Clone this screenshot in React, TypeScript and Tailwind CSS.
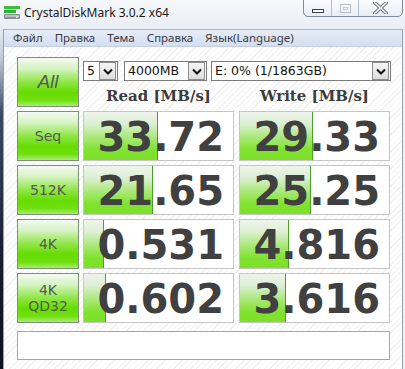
import React from 'react';

type Row = { label: React.ReactNode; read: string; write: string; rw: number; ww: number };

const rows: Row[] = [
  { label: 'Seq', read: '33.72', write: '29.33', rw: 74, ww: 73 },
  { label: '512K', read: '21.65', write: '25.25', rw: 69, ww: 71 },
  { label: '4K', read: '0.531', write: '4.816', rw: 20, ww: 49 },
  { label: <>4K<br />QD32</>, read: '0.602', write: '3.616', rw: 22, ww: 46 },
];

const menu = ['Файл', 'Правка', 'Тема', 'Справка', 'Язык(Language)'];

function GreenButton({ children, className = '' }: { children: React.ReactNode; className?: string }) {
  return (
    <div
      className={`w-[62px] h-[50px] shrink-0 border border-[#7f8d7c] bg-[linear-gradient(to_bottom,#f4faf2_0%,#d6f3c2_22%,#8fe646_50%,#66dc00_72%,#70df10_88%,#a6ee70_100%)] flex items-center justify-center text-center text-[#525c4e] font-['DejaVu_Sans',sans-serif] ${className}`}
    >
      {children}
    </div>
  );
}

function Cell({ value, bar, className = '' }: { value: string; bar: number; className?: string }) {
  return (
    <div className={`relative w-[151px] h-[50px] shrink-0 border border-[#c6c6c6] bg-white ${className}`}>
      <div
        className="absolute left-0 top-0 bottom-0 border-r border-[#4c9e2c] bg-[linear-gradient(to_bottom,#eef5ec_0%,#dcefd2_25%,#a6e872_55%,#7fe22c_80%,#7ee02a_100%)]"
        style={{ width: bar }}
      />
      <div className="relative h-full flex items-center justify-end pr-[9px] pt-[1px] font-['DejaVu_Sans',sans-serif] font-bold text-[40px] leading-none text-[#404040]">
        {value}
      </div>
    </div>
  );
}

function Select({ text, className }: { text: string; className: string }) {
  return (
    <div className={`h-[20px] border border-[#7b7b7b] bg-white flex items-center justify-between ${className}`}>
      <span className="pl-[3px] font-['DejaVu_Sans',sans-serif] text-[12.5px] leading-none text-[#111]">{text}</span>
      <div className="w-[17px] h-[18px] mr-[1px] border border-[#8d8d8d] bg-[linear-gradient(to_bottom,#f6f6f6,#dcdcdc)] flex items-center justify-center">
        <svg width="10" height="7" viewBox="0 0 10 7">
          <path d="M1 1.5 L5 5.5 L9 1.5" fill="none" stroke="#111" strokeWidth="2" />
        </svg>
      </div>
    </div>
  );
}

export default function App() {
  return (
    <div className="w-[405px] h-[369px] overflow-hidden bg-[#eef2f7] flex flex-col relative">
      {/* title bar */}
      <div className="h-[29px] shrink-0 flex items-center pl-[4px] bg-[linear-gradient(to_bottom,#f6f8fb,#e9eef5)]">
        <svg width="17" height="14" viewBox="0 0 17 14" className="mt-[-3px]">
          <rect x="0" y="0" width="16" height="3" fill="#3cbf3c" />
          <rect x="0" y="4" width="12" height="3" fill="#2fae38" />
          <rect x="0" y="8" width="16" height="5" rx="1" fill="#8a9098" />
          <rect x="1" y="9" width="14" height="2" fill="#b8bec6" />
          <circle cx="13" cy="11" r="1" fill="#e8ecf0" />
        </svg>
        <span className="ml-[3px] mt-[-3px] font-['Noto_Sans',sans-serif] text-[12px] text-[#1a1a1a]">CrystalDiskMark 3.0.2 x64</span>
      </div>

      {/* window controls */}
      <div className="absolute top-[-1px] left-[303px] w-[100px] h-[18px] flex border border-[#7f8a9b] rounded-b-[5px] bg-[linear-gradient(to_bottom,#fbfcfe,#e8edf4)] overflow-hidden">
        <div className="w-[28px] h-full border-r border-[#b4bcc8] flex items-center justify-center">
          <div className="w-[12px] h-[4px] mt-[5px] border border-[#3c4450] bg-white" />
        </div>
        <div className="w-[27px] h-full border-r border-[#b4bcc8] flex items-center justify-center">
          <div className="w-[11px] h-[9px] mt-[1px] border border-[#b8bec8] flex items-center justify-center">
            <div className="w-[5px] h-[3px] border border-[#c4cad2]" />
          </div>
        </div>
        <div className="flex-1 h-full flex items-center justify-center">
          <svg width="15" height="12" viewBox="0 0 15 12">
            <path d="M2 1 L13 11 M13 1 L2 11" stroke="#6a7380" strokeWidth="3.6" strokeLinecap="square" />
            <path d="M2 1 L13 11 M13 1 L2 11" stroke="#f4f6f8" strokeWidth="1.6" strokeLinecap="square" />
          </svg>
        </div>
      </div>

      <div className="flex flex-1">
        {/* left frame */}
        <div className="w-[3px] shrink-0 bg-[linear-gradient(to_bottom,#e4eaf2_0%,#c4cfdd_8%,#3a4a64_25%,#141c2c_70%,#0c1220_100%)]" />

        {/* client */}
        <div className="w-[400px] shrink-0 flex flex-col border-l border-[#97a1ae] border-r">
          <div className="h-[18px] shrink-0 flex items-center pl-[9px] gap-[12px] bg-[linear-gradient(to_bottom,#e6ecf8,#d4def0)] border-t border-[#a9b4c4] border-b border-b-[#c5cedb]">
            {menu.map((m) => (
              <span key={m} className="font-['Noto_Sans',sans-serif] text-[11.5px] leading-none text-[#3a3a3a]">
                {m}
              </span>
            ))}
          </div>

          <div className="flex-1 pt-[10px] pl-[13px] bg-[repeating-linear-gradient(135deg,#ffffff_0px,#ffffff_3px,#f1f1f1_3px,#f1f1f1_4px)] flex flex-col gap-[4px]">
            {/* top row */}
            <div className="flex">
              <GreenButton className="italic text-[19px] font-['Liberation_Sans',sans-serif]">All</GreenButton>
              <div className="ml-[4px] flex flex-col">
                <div className="flex mt-[4px]">
                  <Select text="5" className="w-[35px]" />
                  <Select text="4000MB" className="w-[83px] ml-[6px]" />
                  <Select text="E: 0% (1/1863GB)" className="w-[180px] ml-[4px]" />
                </div>
                <div className="flex mt-[4px] h-[22px] items-center font-['DejaVu_Serif',serif] font-bold text-[15px] text-[#3c3c3c]">
                  <div className="w-[151px] text-center">Read [MB/s]</div>
                  <div className="w-[151px] ml-[5px] text-center">Write [MB/s]</div>
                </div>
              </div>
            </div>

            {rows.map((r, i) => (
              <div key={i} className="flex">
                <GreenButton className="text-[14px] leading-[16px]">{r.label}</GreenButton>
                <Cell value={r.read} bar={r.rw} className="ml-[4px]" />
                <Cell value={r.write} bar={r.ww} className="ml-[5px]" />
              </div>
            ))}

            <div className="mt-[4px] w-[373px] h-[29px] border border-[#a6a6a6] bg-white" />
          </div>
        </div>
      </div>
    </div>
  );
}
